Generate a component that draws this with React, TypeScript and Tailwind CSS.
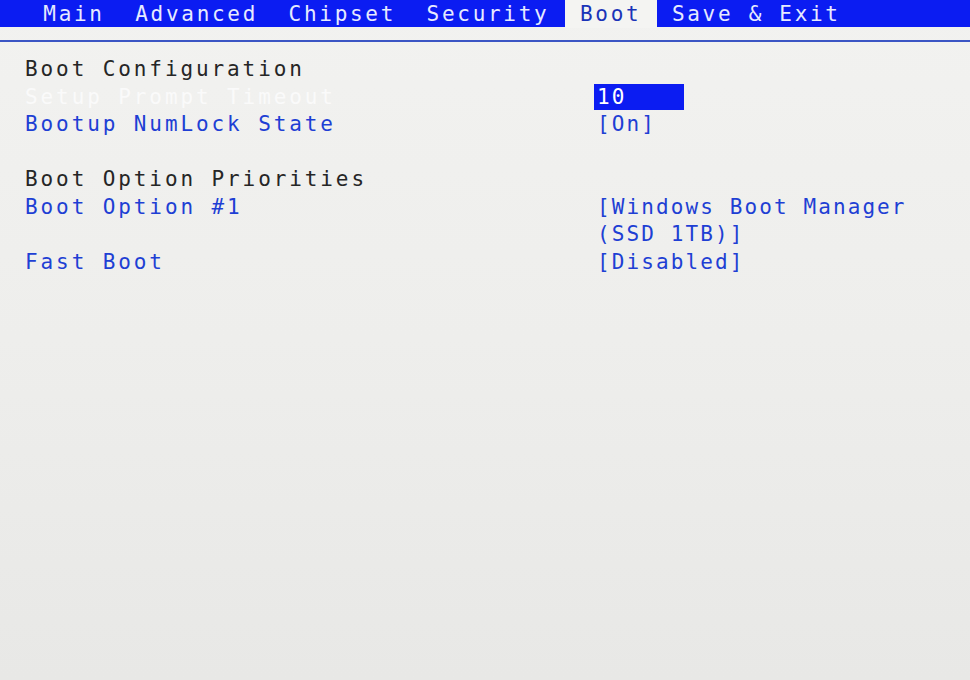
import React from 'react';

const tabs = ['Main', 'Advanced', 'Chipset', 'Security', 'Boot', 'Save & Exit'];
const active = 'Boot';

type Row =
  | { kind: 'head'; text: string }
  | { kind: 'item'; label: string; value?: string; selected?: boolean; focused?: boolean }
  | { kind: 'blank' };

const rows: Row[] = [
  { kind: 'head', text: 'Boot Configuration' },
  { kind: 'item', label: 'Setup Prompt Timeout', value: '10', selected: true, focused: true },
  { kind: 'item', label: 'Bootup NumLock State', value: '[On]' },
  { kind: 'blank' },
  { kind: 'head', text: 'Boot Option Priorities' },
  { kind: 'item', label: 'Boot Option #1', value: '[Windows Boot Manager' },
  { kind: 'item', label: '', value: '(SSD 1TB)]' },
  { kind: 'item', label: 'Fast Boot', value: '[Disabled]' },
];

const mono = "font-['DejaVu_Sans_Mono',monospace] text-[21px] whitespace-pre";

export default function App() {
  return (
    <div className={`w-[970px] h-[680px] overflow-hidden bg-gradient-to-b from-[#f2f2f0] via-[#eeeeec] to-[#e8e8e6] ${mono}`}>
      {/* menu bar */}
      <div className="flex h-[27px] bg-[#0b1cf2] pl-[28px] tracking-[2.7px]">
        {tabs.map(t => (
          <div
            key={t}
            className={
              t === active
                ? 'flex items-center h-[28px] pt-[2px] px-[15.3px] bg-[#f4f4f2] text-[#1a33b8]'
                : 'flex items-center h-[27px] pt-[3px] px-[15.3px] text-[#e6eaff]'
            }
          >
            {t}
          </div>
        ))}
      </div>
      <div className="h-[13px]" />
      <div className="h-[2px] bg-[#3b55c4]" />

      {/* settings list */}
      <div className="flex flex-col pt-[14px] pl-[25px]">
        {rows.map((r, i) => {
          if (r.kind === 'blank') return <div key={i} className="h-[27.5px]" />;
          if (r.kind === 'head')
            return (
              <div key={i} className="h-[27.5px] flex items-center tracking-[2.9px] text-[#262626]">
                {r.text}
              </div>
            );
          return (
            <div key={i} className="h-[27.5px] flex items-center">
              <div className={`w-[569px] tracking-[2.9px] ${r.focused ? 'text-[#fafafa]' : 'text-[#1e3fd4]'}`}>{r.label}</div>
              {r.selected ? (
                <div className="w-[90px] h-[26px] flex items-center pl-[3px] tracking-[2.1px] bg-[#0b1cf2] text-white">{r.value}</div>
              ) : (
                <div className="pl-[3px] tracking-[2.1px] text-[#1e3fd4]">{r.value}</div>
              )}
            </div>
          );
        })}
      </div>
    </div>
  );
}
